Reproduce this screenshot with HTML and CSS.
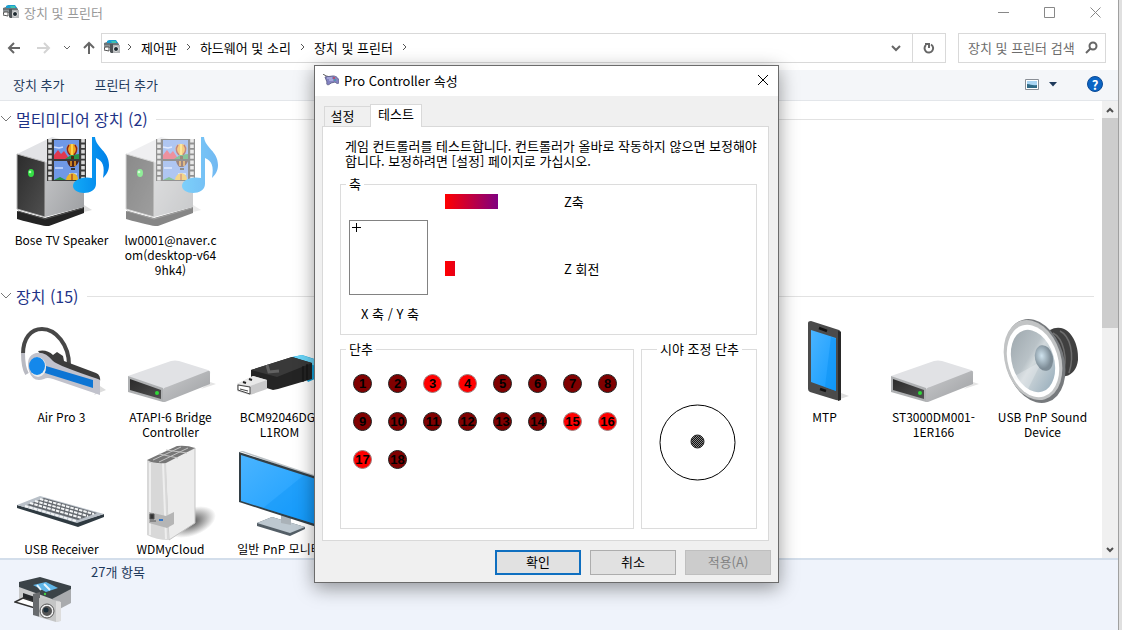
FILE: index.html
```
<!DOCTYPE html>
<html lang="ko">
  <head>
    <meta charset="UTF-8" />
    <title>장치 및 프린터</title>
    <link rel="stylesheet" href="styles.css">
  </head>
  <body>
    <svg class="defs" aria-hidden="true">
      <defs>
        <linearGradient id="side" x1="0" y1="0" x2="1" y2="1">
          <stop offset="0" stop-color="#c9cacc" /><stop offset="1" stop-color="#9d9fa2" />
        </linearGradient>
        <linearGradient id="dark" x1="0" y1="0" x2="1" y2="1">
          <stop offset="0" stop-color="#2b2b2b" /><stop offset="1" stop-color="#505050" />
        </linearGradient>
        <linearGradient id="blue" x1="0" y1="0" x2="1" y2="1">
          <stop offset="0" stop-color="#4ab4ff" /><stop offset="1" stop-color="#129bff" />
        </linearGradient>
        <linearGradient id="note" x1="0" y1="0" x2="1" y2="0">
          <stop offset="0" stop-color="#12aaf8" /><stop offset="1" stop-color="#0080e8" />
        </linearGradient>
        <radialGradient id="dome" cx="0.4" cy="0.4">
          <stop offset="0" stop-color="#cfe3ee" /><stop offset="1" stop-color="#7d8c96" />
        </radialGradient>
        <linearGradient id="cone" x1="0" y1="0" x2="0.6" y2="1">
          <stop offset="0" stop-color="#9aa4aa" /><stop offset="0.5" stop-color="#b9c2c7" /><stop offset="0.6" stop-color="#d2d9dc" /><stop offset="1" stop-color="#a3b6c2" />
        </linearGradient>
        <radialGradient id="shade">
          <stop offset="0" stop-color="#333" stop-opacity="0.9" /><stop offset="1" stop-color="#333" stop-opacity="0" />
        </radialGradient>
        <pattern id="hatch" width="2" height="2" patternUnits="userSpaceOnUse">
          <rect width="2" height="2" fill="#888" /><path d="M0 0h1v1H0zM1 1h1v1H1z" fill="#111" />
        </pattern>
      </defs>

      <symbol id="i-printer-small" viewBox="0 0 16 14">
        <path d="M0 3l3-1h10l2 2v2H0z" fill="#6b7478" />
        <path d="M3 1l2-1h7l2 3H3z" fill="#1b9fd0" /><path d="M7 1h5v2H8z" fill="#3fc3b0" />
        <path d="M0 5h6v3H0z" fill="#8c9296" /><path d="M1 7h4v4l-5-1z" fill="#fff" stroke="#555" />
        <path d="M6 4h3v9H7l-1-1z" fill="#4f5558" />
        <path d="M9 5h7v8H9z" fill="#b3b6b8" />
        <circle cx="12" cy="9" r="2.500" fill="#1f2b31" stroke="#e8e8e8" />
      </symbol>

      <symbol id="i-printer" viewBox="0 0 60 48">
        <path d="M5 8L38 22V37L5 27z" fill="#c9cacb" />
        <path d="M38 22L57 11V27L38 37z" fill="#a9abae" />
        <path d="M9 17l12 4v9L9 26z" fill="#26292c" />
        <path d="M1 26l8-4 18 6-6 4z" fill="#fff" stroke="#333" stroke-width="1.5" />
        <path d="M5 6L26 1 57 10V13L38 23 5 11z" fill="#3b4348" />
        <path d="M19 9l13-3 12 6-12 4z" fill="#60b6e8" />
        <path d="M23 9l4 5M30 8l6 6" stroke="#e8f5fc" stroke-width="2" />
        <path d="M19 18l7-2v25l-7-2z" fill="#686b6e" />
        <path d="M25 22l21 3v20l-4 1-17-5z" fill="#c4c5c5" />
        <path d="M42 25l5 1v19l-5 1z" fill="#ddd" />
        <circle cx="33" cy="35" r="7" fill="#eee" stroke="#555" />
        <circle cx="33" cy="35" r="5" fill="#555" /><circle cx="32" cy="34" r="2.5" fill="#1b2d38" />
        <circle cx="31" cy="18" r="1.2" fill="#4c4" />
      </symbol>

      <symbol id="i-media" viewBox="0 0 96 96">
        <path d="M62 78l16-4-8-5z" fill="#ddd" />
        <path d="M3 75L31 82 70 71V77L35 90Q31 91 3 83z" fill="#242424" />
        <path d="M4 75L31 83 69 72" fill="none" stroke="#555" />
        <path d="M3 18L38 1 70 9V25L31 27z" fill="#e2e3e6" />
        <path d="M31 27L70 9V71L31 81z" fill="url(#side)" />
        <path d="M3 18L31 26V81L3 73z" fill="url(#dark)" stroke="#b7b7b7" />
        <ellipse cx="17" cy="37" rx="3" ry="4" fill="#35df45" /><circle cx="16" cy="36" r="1.3" fill="#b5ffb8" />
        <path d="M33 3H72V45H33z" fill="#3a3a3a" />
        <path d="M36 3V45M69 3V45" stroke="#d9d9d9" stroke-width="3.6" stroke-dasharray="3.6 1.8" />
        <path d="M40 4H65V23H40zM40 25H65V44H40z" fill="#6f98e6" />
        <path d="M40 19l4-5 3 4 3-3 4 6h11v2H40z" fill="#e0384f" /><path d="M51 23l6-4 8-1v5zM40 44l6-3 6 3z" fill="#26944a" />
        <path d="M40 11l5 1 4-1M41 32h8M55 38h8" stroke="#cbdcff" stroke-width="1.5" fill="none" />
        <path d="M58 8c-7 0-7 7-2 11h4c5-4 5-11-2-11z" fill="#eea51c" />
        <path d="M55 9c-3 4-1 8 1 10M61 9c3 4 1 8-1 10" stroke="#8d2020" stroke-width="1.5" fill="none" />
        <path d="M58 8v11" stroke="#ffe45c" stroke-width="1.5" /><path d="M57 20h3v3h-3z" fill="#4a2a10" />
        <path d="M53 25c1 4 3 6 4 6h3c2-1 4-3 5-6z" fill="#4d241d" /><path d="M57 25v5M61 25v5" stroke="#ee9e25" stroke-width="1.5" />
        <path d="M57 32h4v2h-4z" fill="#333" /><path d="M52 44c1-9 12-9 12 0z" fill="#eab52b" /><path d="M58 38v6" stroke="#9b2020" />
        <path d="M78 1h3c1 11 14 14 14 28 0 6-3 10-6 13 2-12 0-17-7-20v26c0 6-6 9-12 9s-11-3-11-7c0-6 9-10 19-8z" fill="url(#note)" />
      </symbol>

      <symbol id="i-drive" viewBox="0 0 96 96">
        <path d="M78 76l15-5-6-2z" fill="#e4e4e4" />
        <path d="M5 63L48 48q4-1 8 0L85 57q3 1 2 4L40 78z" fill="#e1e2e5" />
        <path d="M40 77q0-2 4-3L85 58q2-1 2 2V71L42 89H40z" fill="url(#side)" />
        <path d="M5 63L40 75V89L5 79z" fill="#aeb0b2" />
        <path d="M7 66L38 77V86L7 77z" fill="url(#dark)" />
        <circle cx="34" cy="80" r="2" fill="#2fd938" />
      </symbol>
    </svg>

    <div class="window">
      <header class="titlebar">
        <svg class="app-icon"><use href="#i-printer-small" /></svg>
        <span class="titlebar-text">장치 및 프린터</span>
        <div class="window-controls">
          <button aria-label="최소화"><svg width="11" height="11"><path d="M0 5.500h11" /></svg></button>
          <button aria-label="최대화"><svg width="11" height="11"><path d="M.5 .5h10v10H.5z" /></svg></button>
          <button aria-label="닫기"><svg width="11" height="11"><path d="M.5 .5l10 10M10.500 .5l-10 10" /></svg></button>
        </div>
      </header>

      <nav class="navbar">
        <div class="history">
          <button aria-label="뒤로"><svg width="14" height="12"><path d="M13 6H2M7 1L2 6l5 5" /></svg></button>
          <button aria-label="앞으로" disabled><svg width="14" height="12"><path d="M0 6h12M7 1l5 5-5 5" /></svg></button>
          <button class="recent" aria-label="최근 위치"><svg width="8" height="6"><path d="M1 1l3 3 3-3" /></svg></button>
          <button aria-label="위로"><svg width="12" height="14"><path d="M6 13V2M1 7l5-5 5 5" /></svg></button>
        </div>
        <div class="address">
          <svg class="app-icon"><use href="#i-printer-small" /></svg>
          <svg class="crumb-arrow"><path d="M1 1l3 3-3 3" /></svg>
          <a href="#">제어판</a>
          <svg class="crumb-arrow"><path d="M1 1l3 3-3 3" /></svg>
          <a href="#">하드웨어 및 소리</a>
          <svg class="crumb-arrow"><path d="M1 1l3 3-3 3" /></svg>
          <a href="#">장치 및 프린터</a>
          <svg class="crumb-arrow"><path d="M1 1l3 3-3 3" /></svg>
          <button class="drop" aria-label="이전 위치"><svg width="10" height="7"><path d="M1 1l4 4 4-4" /></svg></button>
          <button class="refresh" aria-label="새로 고침"><svg width="12" height="12"><path d="M8 2.500a4.300 4.300 0 1 1-5 .5M2 2h4v4" /></svg></button>
        </div>
        <div class="search">
          <input type="text" placeholder="장치 및 프린터 검색" aria-label="장치 및 프린터 검색" />
          <svg width="13" height="13"><circle cx="8" cy="5" r="3.500" /><path d="M5.500 7.500L1 12" /></svg>
        </div>
      </nav>

      <div class="commands">
        <button>장치 추가</button>
        <button>프린터 추가</button>
        <div class="commands-right">
          <button aria-label="보기">
            <svg width="14" height="11"><path d="M.5 .5h13v10H.5z" fill="#fff" stroke="#8a8f96" /><path d="M2 2h10v7H2z" fill="#a9d5f3" /><path d="M2 5c4 0 5 2 10 1v3H2z" fill="#2f6a86" /></svg>
          </button>
          <button class="view-more" aria-label="추가 옵션"><svg width="8" height="5"><path d="M0 0h8L4 4.500z" fill="#1e395b" /></svg></button>
          <button class="help" aria-label="도움말">?</button>
        </div>
      </div>

      <div class="content">
        <main class="items">
          <section>
            <button class="group-title"><svg width="12" height="8"><path d="M1 1l5 5 5-5" /></svg>멀티미디어 장치 (2)</button>
            <ul class="grid">
              <li><svg class="icon"><use href="#i-media" /></svg><span>Bose TV Speaker</span></li>
              <li class="offline"><svg class="icon"><use href="#i-media" /></svg><span>lw0001@naver.c<br>om(desktop-v64<br>9hk4)</span></li>
            </ul>
          </section>

          <section>
            <button class="group-title"><svg width="12" height="8"><path d="M1 1l5 5 5-5" /></svg>장치 (15)</button>
            <ul class="grid">
              <li>
                <svg class="icon" viewBox="0 0 96 96">
                  <path d="M80 82l12-5-6-4z" fill="#ddd" />
                  <path d="M9 41C9 25 17 16 28 16c14 0 27 16 27 36" fill="none" stroke="#474747" stroke-width="4" />
                  <path d="M9 40c0 9 1 16 4 21" fill="none" stroke="#b9bac2" stroke-width="4" />
                  <path d="M24 38q9-2 15 4l4-3 6 4 1 5 32 12q5 2 4 9L35 54z" fill="#3c3c3c" />
                  <path d="M22 40q9-2 17 8 6 5 45 18l2 1V82L39 66Q33 64 30 66 19 70 15 58 11 43 22 40z" fill="#c1c2cc" />
                  <path d="M32 53L79 67V75L31 60z" fill="#0d75d4" />
                  <ellipse cx="24" cy="54" rx="8" ry="10" fill="#eee" /><ellipse cx="23" cy="53" rx="8" ry="9" fill="#1488eb" />
                </svg>
                <span>Air Pro 3</span>
              </li>
              <li><svg class="icon"><use href="#i-drive" /></svg><span>ATAPI-6 Bridge Controller</span></li>
              <li>
                <svg class="icon" viewBox="0 0 96 96">
                  <path d="M60 44L70 42 92 49V62L76 69z" fill="#12a4de" />
                  <path d="M61 44l9-2 20 7-4 5z" fill="#6ad5f8" />
                  <path d="M19 57L60 44 80 50V66L46 76 41 77 19 70z" fill="#242424" />
                  <path d="M19 57L60 44 80 50 45 64z" fill="#393939" />
                  <path d="M71 53v16M75 51v16" stroke="#111" />
                  <path d="M35 52l2 7 10-1" fill="none" stroke="#626262" stroke-width="3" />
                  <path d="M5 71L21 63 35 67V76L18 82 5 78z" fill="#c9c9ca" />
                  <path d="M5 71L21 63 35 67 18 73z" fill="#e9e9e9" />
                  <path d="M6 72l12 2v7L6 77z" fill="#fff" stroke="#444" /><path d="M8 76l8 2" stroke="#444" /><path d="M11 69l3 1M17 66l3 1" stroke="#222" stroke-width="2" />
                </svg>
                <span>BCM92046DG-L1ROM</span>
              </li>
              <li class="col-8">
                <svg class="icon" viewBox="0 0 96 96">
                  <path d="M60 87l12-4-8-3z" fill="#ddd" />
                  <path d="M31 10q0-2 3-2L62 17q2 1 2 3V86q-1 2-5 1L33 79q-2-1-2-3z" fill="#4b4b4b" />
                  <path d="M61 18l3 1v68l-3 1z" fill="#292929" />
                  <path d="M34 17L59 25V78L34 69z" fill="url(#blue)" />
                  <path d="M54 24l5 2v52l-11-4z" fill="#0c91f2" opacity="0.5" />
                  <path d="M42 15l8 3M43 76l6 2" stroke="#111" stroke-width="2.500" />
                </svg>
                <span>MTP</span>
              </li>
              <li><svg class="icon"><use href="#i-drive" /></svg><span>ST3000DM001-1ER166</span></li>
              <li>
                <svg class="icon" viewBox="0 0 96 96">
                  <path d="M55 17q5-3 11-2c10 2 18 16 17 32-1 9-6 15-12 16l-9 2z" fill="#404040" />
                  <path d="M58 20c10 5 16 26 9 42M65 18c10 5 15 23 9 42" fill="none" stroke="#6d6d6d" stroke-width="1.500" />
                  <ellipse cx="40" cy="48" rx="29" ry="43" fill="#777a7d" transform="rotate(-17 40 48)" />
                  <ellipse cx="38" cy="47" rx="28" ry="41" fill="#c2c4c5" transform="rotate(-17 38 47)" />
                  <ellipse cx="38" cy="48" rx="25" ry="37" fill="#fff" transform="rotate(-17 38 48)" />
                  <ellipse cx="38" cy="48" rx="21" ry="32" fill="url(#cone)" transform="rotate(-17 38 48)" />
                  <path d="M18 64L47 48 33 76z" fill="#edf2f4" opacity="0.35" />
                  <ellipse cx="49" cy="45" rx="9" ry="13" fill="url(#dome)" transform="rotate(-12 49 45)" />
                </svg>
                <span>USB PnP Sound Device</span>
              </li>
              <li class="col-1">
                <svg class="icon" viewBox="0 0 96 96">
                  <path d="M3 60L63 77 90 69V72L64 82 3 63z" fill="#2f3a41" />
                  <path d="M3 60L26 51 90 69 63 78z" fill="#b9c0c8" />
                  <path d="M13 60L30 53 83 68 64 75z" fill="#64696f" />
                  <path d="M11 61L62 76M16 58L68 73M21 56L74 71M26 54L80 69" stroke="#f3f5f6" stroke-width="2" stroke-dasharray="3.500 1" />
                </svg>
                <span>USB Receiver</span>
              </li>
              <li>
                <svg class="icon" viewBox="0 0 96 96">
                  <ellipse cx="68" cy="77" rx="26" ry="14" fill="url(#shade)" transform="rotate(-20 68 77)" />
                  <path d="M42 17L72 3V78L46 95z" fill="#ececec" stroke="#c5c5c5" />
                  <path d="M24 15Q32 20 43 17L46 95Q33 95 24 90z" fill="#d8d8d8" />
                  <path d="M27 18v72M40 18l3 76" stroke="#eee" stroke-width="2" />
                  <path d="M24 15L54 1Q64 0 72 3L43 18Q31 19 24 15z" fill="#777" />
                  <path d="M30 15L58 2M36 17L65 3M43 5l21 3M36 9l19 4" stroke="#c4c4c4" />
                  <path d="M26 67l17 4 8-4v12l-7 4-18-5z" fill="#b5b5b5" />
                  <path d="M27 69h4v5h-4zM27 76h6" fill="#333" stroke="#555" /><path d="M36 75h4" stroke="#3476c8" stroke-width="2" />
                </svg>
                <span>WDMyCloud</span>
              </li>
              <li>
                <svg class="icon" viewBox="0 0 96 96">
                  <path d="M25 78L40 72 73 82V84L58 91 25 81z" fill="#535e66" />
                  <path d="M25 78L40 72 73 82 58 88z" fill="#bdc8d0" />
                  <path d="M49 66l10 3v11l-10-2z" fill="#aab2b8" />
                  <path d="M7 6h4L94 34v3z" fill="#bbc1c5" />
                  <path d="M7 7L94 35V85L7 57z" fill="#333f46" />
                  <path d="M9 10L93 37V82L9 56z" fill="url(#blue)" />
                  <path d="M31 63L72 30 93 37V82z" fill="#0991f4" opacity="0.35" />
                </svg>
                <span>일반 PnP 모니터</span>
              </li>
            </ul>
          </section>
        </main>
        <div class="scrollbar">
          <button aria-label="위로 스크롤"><svg width="8" height="6"><path d="M1 5l3-3 3 3" /></svg></button>
          <div class="thumb"></div>
          <button aria-label="아래로 스크롤"><svg width="8" height="6"><path d="M1 1l3 3 3-3" /></svg></button>
        </div>
      </div>

      <footer class="details">
        <svg class="details-icon"><use href="#i-printer" /></svg>
        <span>27개 항목</span>
      </footer>
    </div>

    <div class="dialog" role="dialog" aria-labelledby="dialog-title">
      <div class="dialog-title">
        <svg width="16" height="12" viewBox="0 0 16 12">
          <path d="M0 0l3 2 5 1" stroke="#555" fill="none" />
          <path d="M2 3l8-1c4 0 6 3 6 6 0 2-2 2-4 0l-4 1c-3 3-5 2-4-1z" fill="#8383c2" stroke="#66668f" />
          <path d="M4 4h5M6 6h4" stroke="#c5c5ed" /><path d="M10 4h2" stroke="#d22" /><path d="M11 6h2" stroke="#2a9" />
        </svg>
        <span id="dialog-title">Pro Controller 속성</span>
        <button aria-label="닫기"><svg width="12" height="12"><path d="M1 1l10 10M11 1L1 11" /></svg></button>
      </div>

      <div class="dialog-body">
        <div class="tabs" role="tablist">
          <button class="tab" role="tab">설정</button>
          <button class="tab active" role="tab" aria-selected="true">테스트</button>
        </div>

        <div class="tab-page" role="tabpanel">
          <p>게임 컨트롤러를 테스트합니다. 컨트롤러가 올바로 작동하지 않으면 보정해야<br>합니다. 보정하려면 [설정] 페이지로 가십시오.</p>

          <fieldset class="axes">
            <legend>축</legend>
            <div class="xy">
              <div class="xy-box"><svg width="9" height="9"><path d="M0 4.500h9M4.500 0v9" stroke="#000" /></svg></div>
              <span>X 축 / Y 축</span>
            </div>
            <div class="bars">
              <div class="bar-row"><div class="bar"><div class="fill" style="width: 53px"></div></div><span>Z축</span></div>
              <div class="bar-row"><div class="bar"><div class="fill" style="width: 10px"></div></div><span>Z 회전</span></div>
            </div>
          </fieldset>

          <div class="lower">
            <fieldset class="buttons">
              <legend>단추</legend>
              <ol>
                <li>1</li><li>2</li><li class="on">3</li><li class="on">4</li><li>5</li><li>6</li><li>7</li><li>8</li>
                <li>9</li><li>10</li><li>11</li><li>12</li><li>13</li><li>14</li><li class="on">15</li><li class="on">16</li>
                <li class="on">17</li><li>18</li>
              </ol>
            </fieldset>
            <fieldset class="pov">
              <legend>시야 조정 단추</legend>
              <svg width="77" height="77"><circle cx="38.500" cy="38.500" r="37.500" fill="none" stroke="#000" /><circle cx="38.500" cy="37.500" r="6.500" fill="url(#hatch)" stroke="#222" /></svg>
            </fieldset>
          </div>
        </div>

        <div class="dialog-actions">
          <button class="primary">확인</button>
          <button>취소</button>
          <button disabled>적용(A)</button>
        </div>
      </div>
    </div>
  </body>
</html>
```
FILE: styles.css
```
* {
  box-sizing: border-box;
}

body {
  margin: 0;
  height: 100vh;
  padding-right: 3px;
  overflow: hidden;
  background-color: #e0e0e0;
  font-family: "Noto Sans CJK KR", sans-serif;
  font-size: 13px;
  line-height: 15px;
  color: #000;
}

button,
input {
  font: inherit;
  color: inherit;
  border: none;
  padding: 0;
  background: none;
}

ul,
ol {
  list-style: none;
  margin: 0;
  padding: 0;
}

svg {
  display: block;
  flex: none;
}

.defs {
  position: absolute;
  width: 0;
  height: 0;
}

/* explorer window */

.window {
  display: flex;
  flex-direction: column;
  height: 100%;
  background-color: #fff;
  border-right: 1px solid #a0a0a0;
}

.titlebar {
  display: flex;
  align-items: center;
  height: 24px;
  padding-left: 3px;
  color: #999;
}

.app-icon {
  width: 16px;
  height: 14px;
}

.titlebar-text {
  margin-left: 5px;
}

.window-controls {
  display: flex;
  margin-left: auto;
}

.window-controls button {
  display: flex;
  justify-content: center;
  width: 46px;
}

.window-controls svg {
  stroke: #888;
  fill: none;
}

.navbar {
  display: flex;
  height: 30px;
  margin: 9px 12px 7px 0;
}

.history {
  display: flex;
  align-items: center;
  width: 101px;
  padding-left: 7px;
  gap: 16px;
}

.history .recent {
  margin: 0 -4px;
}

.history svg {
  stroke: #666;
  stroke-width: 2;
  fill: none;
}

.history button:disabled svg {
  stroke: #d4d4d4;
}

.history .recent svg {
  stroke-width: 1;
}

.address {
  display: flex;
  align-items: center;
  flex: 1;
  border: 1px solid #d9d9d9;
  padding: 0 0 2px 2px;
}

.address a {
  color: #000;
  text-decoration: none;
}

.crumb-arrow {
  width: 6px;
  height: 8px;
  margin: 0 8px 0 9px;
  stroke: #555;
  fill: none;
}

.address .crumb-arrow:nth-child(2) {
  margin: 0 8px 0 7px;
}

.drop,
.refresh {
  display: flex;
  align-items: center;
  justify-content: center;
  width: 33px;
  height: 28px;
  margin-bottom: -2px;
}

.drop {
  margin-left: auto;
}

.refresh {
  border-left: 1px solid #d9d9d9;
}

.drop svg,
.refresh svg {
  stroke: #666;
  stroke-width: 2;
  fill: none;
}

.search {
  display: flex;
  align-items: center;
  width: 148px;
  margin-left: 12px;
  padding: 0 7px 2px 9px;
  border: 1px solid #d9d9d9;
}

.search input {
  flex: 1;
  min-width: 0;
}

.search input::placeholder {
  color: #6d6d6d;
}

.search svg {
  stroke: #666;
  stroke-width: 2;
  fill: none;
}

.commands {
  display: flex;
  align-items: center;
  gap: 30px;
  height: 31px;
  padding: 0 15px 2px 13px;
  background-color: #f4f6f9;
  border-bottom: 1px solid #e3e6ea;
  color: #1e395b;
}

.commands-right {
  display: flex;
  align-items: center;
  margin-left: auto;
}

.view-more {
  margin: 0 30px 0 10px;
}

.help {
  width: 16px;
  height: 16px;
  border-radius: 50%;
  background-color: #0a64c4;
  border: 1px solid #0b4a96;
  color: #fff;
  font-weight: bold;
  line-height: 13px;
}

.content {
  display: flex;
  flex: 1;
  min-height: 0;
}

.items {
  flex: 1;
  min-width: 0;
  overflow: hidden;
  padding-top: 8px;
}

.group-title {
  display: flex;
  align-items: center;
  width: 100%;
  height: 20px;
  padding-right: 8px;
  font-size: 16px;
  color: #1e3287;
}

.group-title svg {
  margin-right: 4px;
  stroke: #777;
  fill: none;
}

.group-title::after {
  content: "";
  flex: 1;
  height: 1px;
  margin-left: 8px;
  background-color: #e2e2e2;
}

.grid {
  display: grid;
  grid-template-columns: repeat(auto-fill, 109px);
  row-gap: 6px;
  padding: 7px 0 9px;
  margin-left: 7px;
}

.grid li {
  display: flex;
  flex-direction: column;
  align-items: center;
  min-height: 126px;
  font-size: 12px;
  text-align: center;
}

.grid span {
  max-width: 100px;
}

.icon {
  width: 96px;
  height: 96px;
}

.offline .icon {
  opacity: 0.55;
}

.col-1 {
  grid-column: 1;
}

.col-8 {
  grid-column: 8;
}

.scrollbar {
  display: flex;
  flex-direction: column;
  width: 16px;
  background-color: #f0f0f0;
}

.scrollbar button {
  display: flex;
  align-items: center;
  justify-content: center;
  height: 17px;
}

.scrollbar svg {
  stroke: #505050;
  stroke-width: 2;
  fill: none;
}

.scrollbar .thumb {
  height: 46%;
  margin-bottom: auto;
  background-color: #cdcdcd;
}

.details {
  display: flex;
  height: 72px;
  padding: 4px 14px;
  gap: 17px;
  background-color: #eff3fb;
  border-top: 2px solid #d3deeb;
  color: #1e395b;
}

.details-icon {
  width: 60px;
  height: 48px;
  margin-top: 12px;
}

/* controller dialog */

.dialog {
  position: absolute;
  left: 314px;
  top: 65px;
  width: 465px;
  border: 1px solid #6b6b6b;
  background-color: #f0f0f0;
  box-shadow: 0 5px 18px rgba(0, 0, 0, 0.4);
}

.dialog-title {
  display: flex;
  align-items: center;
  gap: 5px;
  height: 30px;
  padding: 0 9px 2px 8px;
  background-color: #fff;
}

.dialog-title button {
  margin-left: auto;
}

.dialog-title button svg {
  stroke: #000;
  fill: none;
}

.dialog-body {
  padding: 8px 7px 7px;
}

.tabs {
  display: flex;
  align-items: flex-end;
  padding-left: 2px;
}

.tab {
  width: 47px;
  height: 20px;
  padding: 0 10px 2px 0;
  border: 1px solid #d9d9d9;
  border-bottom: none;
}

.tab.active {
  width: 52px;
  height: 23px;
  margin: 0 0 -1px -1px;
  padding: 0 0 6px;
  background-color: #fff;
}

.tab-page {
  margin-right: 2px;
  padding: 11px 11px 11px 17px;
  background-color: #fff;
  border: 1px solid #d9d9d9;
}

.tab-page p {
  margin: 0 0 8px 5px;
  white-space: nowrap;
}

fieldset {
  margin: 0;
  padding: 0;
  min-width: 0;
  border: 1px solid #dcdcdc;
}

legend {
  margin-left: 5px;
  padding: 0 3px;
  line-height: 16px;
}

.axes {
  display: flex;
  height: 159px;
}

.xy {
  display: flex;
  flex-direction: column;
  gap: 11px;
  width: 79px;
  margin: 28px 17px 0 8px;
}

.xy span {
  padding-left: 12px;
}

.xy-box {
  width: 79px;
  height: 75px;
  padding: 2px;
  border: 1px solid #828282;
}

.bars {
  display: flex;
  flex-direction: column;
  gap: 52px;
  padding-top: 2px;
}

.bar-row {
  display: flex;
}

.bar {
  width: 119px;
  height: 15px;
}

.fill {
  height: 100%;
  background: linear-gradient(to right, #f00, #800080) 0 0 / 53px 100%;
}

.lower {
  display: flex;
  gap: 7px;
  margin-top: 6px;
}

.buttons {
  flex: 1;
  height: 188px;
}

.buttons ol {
  display: grid;
  grid-template-columns: repeat(8, 19px);
  gap: 19px 16px;
  padding: 17px 0 0 12px;
}

.buttons li {
  display: flex;
  justify-content: center;
  height: 19px;
  overflow: hidden;
  border: 1px solid #222;
  border-radius: 50%;
  background-color: #800000;
  font: bold 13px/17px "Liberation Sans", sans-serif;
}

.buttons .on {
  border-color: #a08080;
  background-color: #f00;
}

.pov {
  width: 116px;
}

.pov legend {
  margin-left: 15px;
}

.pov svg {
  margin: 47px 0 0 17px;
}

.dialog-actions {
  display: flex;
  justify-content: flex-end;
  gap: 9px;
  margin-top: 9px;
}

.dialog-actions button {
  width: 86px;
  height: 25px;
  padding-bottom: 2px;
  background-color: #e1e1e1;
  border: 1px solid #adadad;
}

.dialog-actions .primary {
  border: 2px solid #0f6fc0;
}

.dialog-actions button:disabled {
  background-color: #ccc;
  border-color: #bfbfbf;
  color: #838383;
}
```
